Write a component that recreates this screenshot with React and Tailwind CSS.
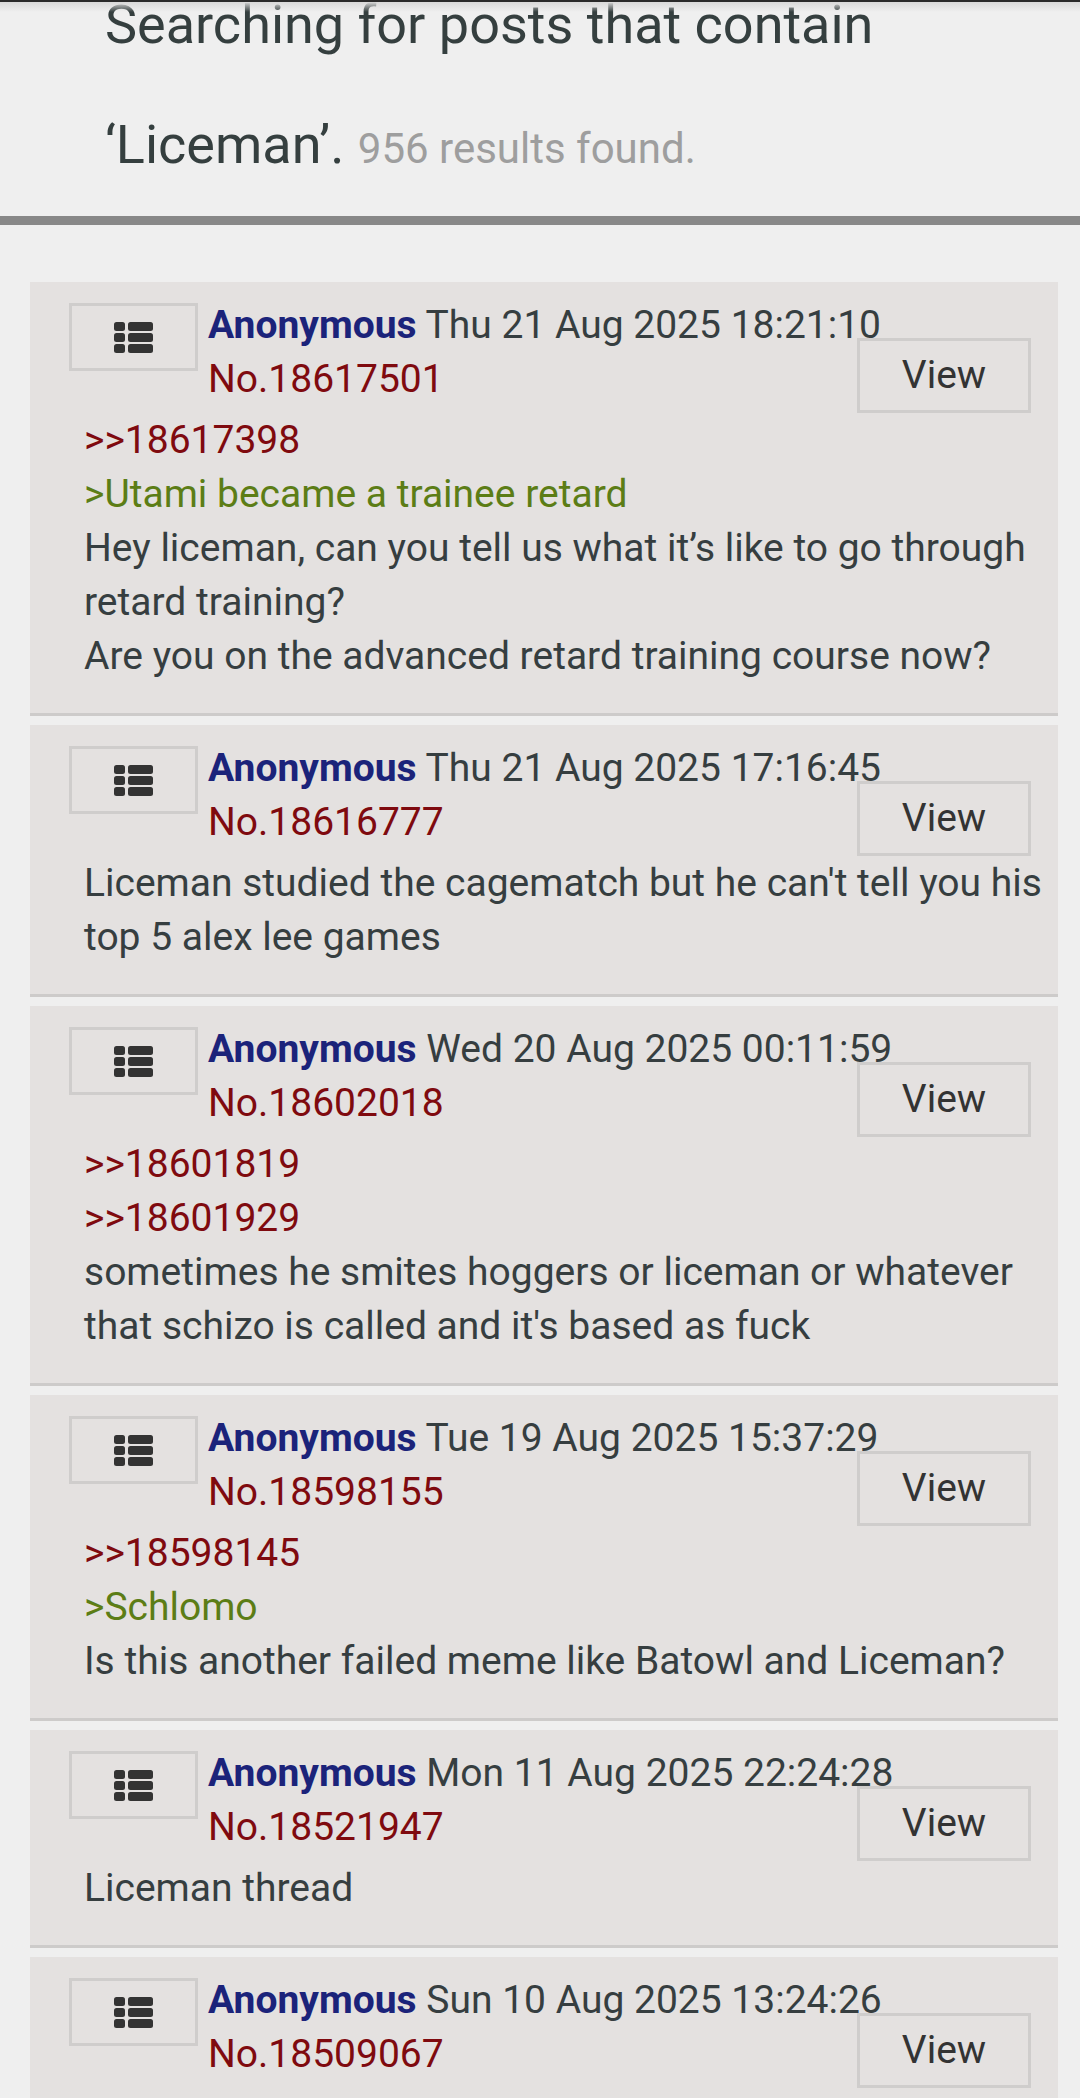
const posts = [
  {
    id: '18617501',
    date: 'Thu 21 Aug 2025 18:21:10',
    lines: [
      { kind: 'quote', text: '>>18617398' },
      { kind: 'green', text: '>Utami became a trainee retard' },
      { kind: 'text', text: 'Hey liceman, can you tell us what it’s like to go through retard training?' },
      { kind: 'text', text: 'Are you on the advanced retard training course now?' },
    ],
  },
  {
    id: '18616777',
    date: 'Thu 21 Aug 2025 17:16:45',
    lines: [
      { kind: 'text', text: "Liceman studied the cagematch but he can't tell you his top 5 alex lee games" },
    ],
  },
  {
    id: '18602018',
    date: 'Wed 20 Aug 2025 00:11:59',
    lines: [
      { kind: 'quote', text: '>>18601819' },
      { kind: 'quote', text: '>>18601929' },
      { kind: 'text', text: "sometimes he smites hoggers or liceman or whatever that schizo is called and it's based as fuck" },
    ],
  },
  {
    id: '18598155',
    date: 'Tue 19 Aug 2025 15:37:29',
    lines: [
      { kind: 'quote', text: '>>18598145' },
      { kind: 'green', text: '>Schlomo' },
      { kind: 'text', text: 'Is this another failed meme like Batowl and Liceman?' },
    ],
  },
  {
    id: '18521947',
    date: 'Mon 11 Aug 2025 22:24:28',
    lines: [{ kind: 'text', text: 'Liceman thread' }],
  },
  {
    id: '18509067',
    date: 'Sun 10 Aug 2025 13:24:26',
    lines: [{ kind: 'text', text: 'Liceman thread' }],
  },
];

const ListIcon = () => (
  <svg width="39" height="31" viewBox="0 0 39 31" fill="#333333">
    <rect x="0" y="0" width="11" height="9" rx="2.5" />
    <rect x="14" y="0" width="25" height="9" rx="2.5" />
    <rect x="0" y="11" width="11" height="9" rx="2.5" />
    <rect x="14" y="11" width="25" height="9" rx="2.5" />
    <rect x="0" y="22" width="11" height="9" rx="2.5" />
    <rect x="14" y="22" width="25" height="9" rx="2.5" />
  </svg>
);

const lineClass = {
  quote: 'text-[#7f0a0f]',
  green: 'text-[#5c7d16]',
  text: 'text-[#363e40]',
};

const Post = ({ post }) => (
  <div className="bg-[#e4e1e0] border-b-[3px] border-[#cdcbca] pt-[16px] pl-[39px] pb-[30px]">
    {/* header: menu box, poster info, view button */}
    <div className="flex items-start pr-[27px]">
      <div className="mt-[5px] w-[129px] h-[68px] shrink-0 border-[3px] border-[#cfcdcc] flex items-center justify-center">
        <ListIcon />
      </div>
      <div className="ml-[10px] flex-1 min-w-0 whitespace-nowrap text-[39px] leading-[54px]">
        <div>
          <span className="font-bold text-[#1b237a]">Anonymous</span>{' '}
          <span className="text-[#363e40]">{post.date}</span>
        </div>
        <div className="text-[#7f0a0f]">No.{post.id}</div>
      </div>
      <button className="mt-[40px] w-[174px] h-[75px] shrink-0 border-[3px] border-[#cfcdcc] text-[39px] text-[#333333] flex items-center justify-center">
        View
      </button>
    </div>

    <div className="mt-0 ml-[15px] mr-[4px] text-[39px] leading-[54px]">
      {post.lines.map((line, i) => (
        <div key={i} className={lineClass[line.kind]}>
          {line.text}
        </div>
      ))}
    </div>
  </div>
);

export default function App() {
  return (
    <div className="relative min-h-screen bg-[#efefef] overflow-hidden font-['Roboto','Liberation_Sans',sans-serif]">
      <div className="absolute top-0 left-0 right-0 h-[12px] border-t-[2px] border-[#2a2a2a] bg-gradient-to-b from-[#d9d9d9] to-transparent" />

      <div className="pl-[105px] pr-[20px] pb-[7px]">
        <h1 className="-mt-[35px] text-[54px] leading-[120px] font-normal text-[#353f3f]">
          Searching for posts that contain ‘Liceman’.{' '}
          <span className="text-[42px] text-[#9e9e9e]">956 results found.</span>
        </h1>
      </div>
      <div className="h-[9px] bg-[#888888]" />

      <div className="mt-[57px] ml-[30px] mr-[22px] flex flex-col gap-[9px]">
        {posts.map((post) => (
          <Post key={post.id} post={post} />
        ))}
      </div>
    </div>
  );
}
